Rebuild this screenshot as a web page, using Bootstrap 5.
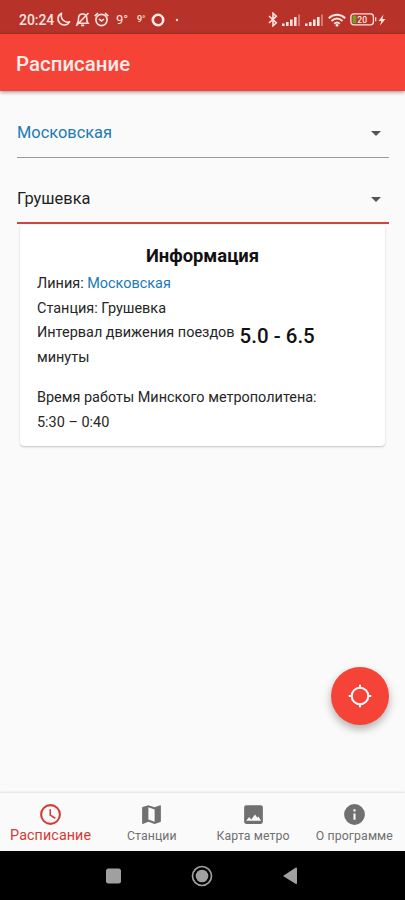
<!DOCTYPE html>
<html lang="ru">
<head>
<meta charset="utf-8">
<meta name="viewport" content="width=device-width, initial-scale=1">
<title>Расписание</title>
<link href="https://cdn.jsdelivr.net/npm/bootstrap@5.3.0/dist/css/bootstrap.min.css" rel="stylesheet">
<style>
body{font-family:Roboto,"Noto Sans",sans-serif;background:#fafafa;color:#1c1c1c;height:900px;overflow:hidden}
svg{display:block;flex:none}
.statusbar{height:34px;padding:5px 19px 0;background:#b73229;color:#ffe3df;line-height:1}
.clock{font-size:13.9px;font-weight:500;width:37px;white-space:nowrap;padding-top:2px}
.temp{font-size:13px;width:19px;padding-left:6px}
.temp-sm{font-size:9px;width:18px;padding-left:4px;font-weight:500}
.appbar{height:57px;padding:3px 16px 0;background:#f64338;box-shadow:0 1px 4px rgba(0,0,0,.45);z-index:1}
.appbar h1{font-size:20.4px;font-weight:500;color:#ffebe8;line-height:1;letter-spacing:.05px}
.fields{padding:0 16px 0 17px}
.picker{background:none;border:0;border-bottom:1px solid #999;border-radius:0;padding:0 8px 0 0;font-size:16.4px;line-height:20px;color:#1f1f1f}
.picker-line{height:67px;padding-top:16px}
.picker-station{height:66px;padding-top:15px;border-bottom:2px solid #cf453f}
.blue{color:#2179b5}
.info{margin:1px 20px 0;height:221px;border:0;border-radius:4px;box-shadow:0 1px 2px rgba(0,0,0,.22);padding:19px 17px 0;font-size:14.45px;color:#262626}
.info h2{font-size:18.4px;line-height:23px;font-weight:700;color:#111;margin:0 0 5px;text-align:center}
.info p{margin:0;line-height:24.5px}
.interval{font-size:20.5px;line-height:20px;font-weight:500;color:#111;margin-left:5px;padding-top:5px}
.fab{width:58px;height:58px;background:#f64338;right:16px;bottom:175px;box-shadow:0 4px 9px rgba(0,0,0,.3)}
.tabs{height:58px;background:#fafafa;box-shadow:0 -1px 2px rgba(0,0,0,.1)}
.tab{color:#707070;font-size:12.3px;line-height:14px;padding-top:9px;text-decoration:none;white-space:nowrap;letter-spacing:.1px}
.tab svg{margin-bottom:2px}
.tab.active{color:#d23b35;font-size:14.3px}
.tab.active svg{margin-bottom:1px}
.sysnav{height:49px;background:#000;padding-right:2px}
</style>
</head>
<body class="d-flex flex-column">
<div class="statusbar d-flex align-items-center flex-shrink-0">
  <span class="clock">20:24</span>
  <svg width="15" height="15" viewBox="0 0 15 15" fill="none" stroke="currentColor" stroke-width="1.6" stroke-linejoin="round"><path d="M5.5 1.2A6.2 6.2 0 1 0 13.6 9.8C8.8 11.5 4 7 5.5 1.2Z"/></svg>
  <svg class="ms-1" width="15" height="15" viewBox="0 0 15 15" fill="none" stroke="currentColor" stroke-width="1.6"><path d="M2.5 11.3H13C11.8 9.8 11.8 8.6 11.8 6.5C11.8 3.7 10 2 7.6 2S3.5 3.7 3.5 6.5C3.5 8.6 3.4 9.8 2.5 11.3ZM6 13.4h3.2M13.5 1L1.2 13.7"/></svg>
  <svg class="ms-1" width="16" height="15" viewBox="0 0 16 15" fill="none" stroke="currentColor" stroke-width="1.6"><circle cx="7.5" cy="8" r="5.6"/><path d="M.7 4.2L4 1.2M14.3 4.2L11 1.2M5 7l2.6 2L10 7"/></svg>
  <span class="temp">9°</span>
  <span class="temp-sm ms-1">9°</span>
  <svg width="14" height="14" viewBox="0 0 14 14" fill="none" stroke="#ffebe8" stroke-width="2.6"><circle cx="7" cy="7" r="5.2"/></svg>
  <svg width="24" height="14" viewBox="0 0 24 14" fill="currentColor"><circle cx="12" cy="7" r="1.2"/></svg>
  <svg class="ms-auto" width="10" height="15" viewBox="0 0 10 15" fill="none" stroke="currentColor" stroke-width="1.6"><path d="M1 4l7.3 6.8L5 13.8V1.2l3.3 3L1 11"/></svg>
  <svg class="ms-1" width="19" height="12" viewBox="0 0 19 12" fill="currentColor"><path d="M0 9.5h2.6V12H0zM4 8h2.6v4H4zM8 5.5h2.6V12H8zM12 3h2.6v9H12z"/><path opacity=".4" d="M16 .5h2V12h-2z"/></svg>
  <svg class="ms-1" width="19" height="12" viewBox="0 0 19 12" fill="currentColor"><path d="M0 9.5h2.6V12H0zM4 8h2.6v4H4zM8 5.5h2.6V12H8zM12 3h2.6v9H12z"/><path opacity=".4" d="M16 .5h2V12h-2z"/></svg>
  <svg class="ms-1" width="18" height="14" viewBox="0 0 18 14" fill="none" stroke="currentColor" stroke-width="1.9"><path d="M.8 5.2C5.5.6 12.5.6 17.2 5.2M3.5 8C7 4.8 11 4.8 14.5 8M6.2 10.7c1.8-1.6 3.8-1.6 5.6 0"/><circle cx="9" cy="12.3" r="1.4" fill="currentColor" stroke="none"/></svg>
  <svg class="ms-1" width="28" height="13" viewBox="0 0 28 13"><rect x=".9" y=".9" width="22.5" height="11" rx="2.8" fill="none" stroke="#ffe3df" stroke-width="1.3"/><rect x="2.5" y="2.5" width="3.8" height="7.8" rx="1" fill="#69a426"/><path d="M25 4.3h1.3v4H25z" fill="#ffe3df"/><text x="7.3" y="9.5" font-size="8.6" font-weight="500" fill="#ffe3df">20</text></svg>
  <svg width="8" height="12" viewBox="0 0 8 12" fill="currentColor"><path d="M5.5.5L.5 7h2.8L2 11.5 7.5 5H4.4z"/></svg>
</div>
<header class="appbar d-flex align-items-center flex-shrink-0"><h1 class="m-0">Расписание</h1></header>
<main class="flex-grow-1">
  <div class="fields">
    <button class="picker picker-line w-100 d-flex align-items-start justify-content-between blue" type="button"><span class="mt-3 lh-sm">Московская</span><svg class="mt-4" width="10" height="5" viewBox="0 0 10 5"><path d="M0 0h10L5 5z" fill="#555"/></svg></button>
    <button class="picker picker-station w-100 d-flex align-items-start justify-content-between" type="button"><span class="mt-3 lh-sm">Грушевка</span><svg class="mt-4" width="10" height="5" viewBox="0 0 10 5"><path d="M0 0h10L5 5z" fill="#555"/></svg></button>
  </div>
  <section class="card info">
    <h2>Информация</h2>
    <p>Линия: <span class="blue">Московская</span></p>
    <p>Станция: Грушевка</p>
    <div class="d-flex align-items-start"><p>Интервал движения поездов<br>минуты</p><span class="interval">5.0 - 6.5</span></div>
    <p class="mt-3">Время работы Минского метрополитена:<br>5:30 – 0:40</p>
  </section>
</main>
<button class="fab btn rounded-circle border-0 p-0 position-absolute d-flex align-items-center justify-content-center" type="button" aria-label="Ближайшая станция">
  <svg width="24" height="24" viewBox="0 0 24 24" fill="none" stroke="#fff" stroke-width="2"><circle cx="12" cy="12" r="8.3"/><path d="M12 .7v3.5M12 19.8v3.5M.7 12h3.5M19.8 12h3.5"/></svg>
</button>
<nav class="tabs d-flex flex-shrink-0">
  <a class="tab active col-3 d-flex flex-column align-items-center" href="#"><svg width="25" height="25" viewBox="0 0 24 24" fill="currentColor"><path d="M12 2a10 10 0 1 0 0 20 10 10 0 0 0 0-20zm0 18a8 8 0 1 1 0-16 8 8 0 0 1 0 16zm.5-13H11v6l5.2 3.2.8-1.3-4.5-2.7z"/></svg>Расписание</a>
  <a class="tab col-3 d-flex flex-column align-items-center" href="#"><svg width="25" height="25" viewBox="0 0 24 24" fill="currentColor"><path d="M20.5 3l-.2 0L15 5.1 9 3 3.4 4.9c-.2.1-.4.3-.4.5V20.5c0 .3.2.5.5.5l.2 0L9 18.9l6 2.1 5.6-1.9c.2-.1.4-.3.4-.5V3.5c0-.3-.2-.5-.5-.5zM15 19l-6-2.1V5l6 2.1z"/></svg>Станции</a>
  <a class="tab col-3 d-flex flex-column align-items-center" href="#"><svg width="25" height="25" viewBox="0 0 24 24" fill="currentColor"><path d="M21 19V5a2 2 0 0 0-2-2H5a2 2 0 0 0-2 2v14a2 2 0 0 0 2 2h14a2 2 0 0 0 2-2zM5 18l2.8-3.6 2 2.4L13.5 12l2.2 3.2 1-1.2L19.3 18z"/></svg>Карта метро</a>
  <a class="tab col-3 d-flex flex-column align-items-center" href="#"><svg width="25" height="25" viewBox="0 0 24 24" fill="currentColor"><path d="M12 2a10 10 0 1 0 0 20 10 10 0 0 0 0-20zm1 15h-2v-6h2zm0-8h-2V7h2z"/></svg>О программе</a>
</nav>
<footer class="sysnav d-flex align-items-center justify-content-center flex-shrink-0">
  <svg width="202" height="22" viewBox="0 0 202 22" fill="#a0a0a0"><rect x="5" y="3.5" width="15" height="15" rx="2.5"/><circle cx="101" cy="11" r="9.5" fill="none" stroke="#a0a0a0" stroke-width="1.7"/><circle cx="101" cy="11" r="6.3"/><path d="M182 11L194.5 2.7Q196 2.1 196 3.5V18Q196 19.5 194.5 18.8z"/></svg>
</footer>
<script src="https://cdn.jsdelivr.net/npm/bootstrap@5.3.0/dist/js/bootstrap.bundle.min.js"></script>
</body>
</html>
